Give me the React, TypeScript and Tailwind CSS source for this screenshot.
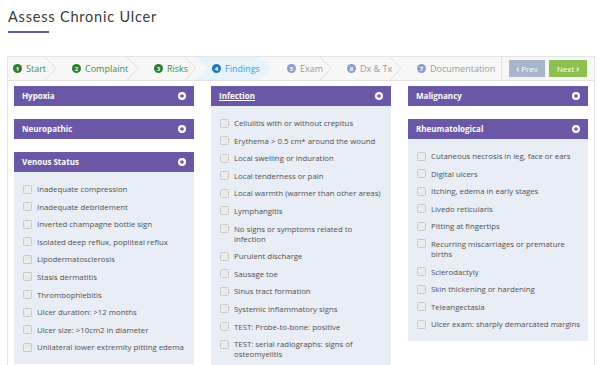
import React from "react";

type Step = { n: number; label: string; state: "done" | "active" | "todo"; w: string };

const steps: Step[] = [
  { n: 1, label: "Start", state: "done", w: "w-[48px]" },
  { n: 2, label: "Complaint", state: "done", w: "w-[82px]" },
  { n: 3, label: "Risks", state: "done", w: "w-[58px]" },
  { n: 4, label: "Findings", state: "active", w: "w-[75px]" },
  { n: 5, label: "Exam", state: "todo", w: "w-[60px]" },
  { n: 6, label: "Dx & Tx", state: "todo", w: "w-[70px]" },
  { n: 7, label: "Documentation", state: "todo", w: "w-[100px]" },
];

const venous = [
  "Inadequate compression",
  "Inadequate debridement",
  "Inverted champagne bottle sign",
  "Isolated deep reflux, popliteal reflux",
  "Lipodermatosclerosis",
  "Stasis dermatitis",
  "Thrombophlebitis",
  "Ulcer duration: >12 months",
  "Ulcer size: >10cm2 in diameter",
  "Unilateral lower extremity pitting edema",
];

const infection = [
  "Cellulitis with or without crepitus",
  "Erythema > 0.5 cm* around the wound",
  "Local swelling or induration",
  "Local tenderness or pain",
  "Local warmth (warmer than other areas)",
  "Lymphangitis",
  "No signs or symptoms related to\ninfection",
  "Purulent discharge",
  "Sausage toe",
  "Sinus tract formation",
  "Systemic inflammatory signs",
  "TEST: Probe-to-bone: positive",
  "TEST: serial radiographs: signs of\nosteomyelitis",
];

const rheum = [
  "Cutaneous necrosis in leg, face or ears",
  "Digital ulcers",
  "Itching, edema in early stages",
  "Livedo reticularis",
  "Pitting at fingertips",
  "Recurring miscarriages or premature\nbirths",
  "Sclerodactyly",
  "Skin thickening or hardening",
  "Teleangectasia",
  "Ulcer exam: sharply demarcated margins",
];

function StepTab({ step, last }: { step: Step; last: boolean }) {
  const circle =
    step.state === "done"
      ? "bg-[#2f7d32]"
      : step.state === "active"
        ? "bg-[#2a78ad]"
        : "bg-[#8e9dcb]";
  const text =
    step.state === "done"
      ? "text-[#3e8e41]"
      : step.state === "active"
        ? "text-[#4a9bd1]"
        : "text-[#9a9a9a]";
  return (
    <div
      className={`relative flex h-full shrink-0 items-center gap-[4px] ${step.w} ${
        step.state === "active"
          ? "bg-[#e6f3fb] pl-[16px] [clip-path:polygon(0_0,calc(100%-11px)_0,100%_50%,calc(100%-11px)_100%,0_100%,11px_50%)]"
          : step.n === 1
            ? "pl-[5px]"
            : "pl-[16px]"
      }`}
    >
      <span
        className={`flex h-[9px] w-[9px] items-center justify-center rounded-full text-[6px] font-bold leading-none text-white ${circle}`}
      >
        {step.n}
      </span>
      <span className={`text-[9px] ${text}`}>{step.label}</span>
      {!last && step.state !== "active" && (
        <svg
          className="absolute right-0 top-0 h-full w-[11px]"
          viewBox="0 0 11 24"
          preserveAspectRatio="none"
        >
          <path d="M0 0 L11 12 L0 24" fill="none" stroke="#dcdcdc" strokeWidth="1" />
        </svg>
      )}
    </div>
  );
}

function PlusIcon() {
  return (
    <svg width="8" height="8" viewBox="0 0 10 10">
      <circle cx="5" cy="5" r="5" fill="#ffffff" />
      <path d="M5 2.4 V7.6 M2.4 5 H7.6" stroke="#6a58a6" strokeWidth="1.6" />
    </svg>
  );
}

function PanelHeader({ title, underline }: { title: string; underline?: boolean }) {
  return (
    <div className="flex h-[20px] items-center justify-between bg-[#6a58a6] pl-[8px] pr-[8px]">
      <span className={`text-[8px] font-bold text-white ${underline ? "underline" : ""}`}>
        {title}
      </span>
      <PlusIcon />
    </div>
  );
}

function CheckList({ items }: { items: string[] }) {
  return (
    <div className="flex flex-col gap-[7.6px] bg-[#e9eef6] px-[9px] pb-[12px] pt-[12px]">
      {items.map((t) => (
        <label key={t} className="flex items-start gap-[5px]">
          <span className="mt-[0.5px] h-[9px] w-[9px] shrink-0 rounded-[1.5px] border border-[#c9c9c9] bg-[#ebebeb]" />
          <span className="whitespace-pre text-[7.8px] leading-[10px] text-[#505050]">{t}</span>
        </label>
      ))}
    </div>
  );
}

export default function App() {
  return (
    <div className="h-[365px] w-[600px] overflow-hidden bg-white font-['Open_Sans',sans-serif]">
      <div className="pl-[8px] pt-[6px]">
        <h1 className="font-['Lato',sans-serif] text-[14.5px] leading-[22px] tracking-[0.8px] text-[#3a3a3a]">
          Assess Chronic Ulcer
        </h1>
        <div className="mt-[3px] h-[2px] w-[41px] bg-[#6a58a6]" />
      </div>
      <div className="ml-[7px] mt-[23px] w-[588px] border border-[#e3e3e3] bg-white">
        <div className="flex h-[24px] items-stretch border-b border-[#e3e3e3] bg-[#f7f7f7]">
          {steps.map((s, i) => (
            <StepTab key={s.n} step={s} last={i === steps.length - 1} />
          ))}
          <div className="ml-auto flex items-center gap-[4px] border-l border-[#e3e3e3] pl-[7px] pr-[8px]">
            <button className="flex h-[17px] w-[36px] items-center justify-center gap-[2px] bg-[#a8b5ca] text-[8px] text-white">
              <span className="text-[8px] font-bold">‹</span>Prev
            </button>
            <button className="flex h-[17px] w-[38px] items-center justify-center gap-[2px] bg-[#8cc152] text-[8px] text-white">
              Next<span className="text-[8px] font-bold">›</span>
            </button>
          </div>
        </div>
        <div className="flex gap-[17px] px-[6px] pt-[5px]">
          <div className="flex w-[180px] flex-col gap-[13px]">
            <PanelHeader title="Hypoxia" />
            <PanelHeader title="Neuropathic" />
            <div>
              <PanelHeader title="Venous Status" />
              <CheckList items={venous} />
            </div>
          </div>
          <div className="flex w-[180px] flex-col">
            <PanelHeader title="Infection" underline />
            <CheckList items={infection} />
          </div>
          <div className="flex w-[180px] flex-col gap-[13px]">
            <PanelHeader title="Malignancy" />
            <div>
              <PanelHeader title="Rheumatological" />
              <CheckList items={rheum} />
            </div>
          </div>
        </div>
      </div>
    </div>
  );
}
